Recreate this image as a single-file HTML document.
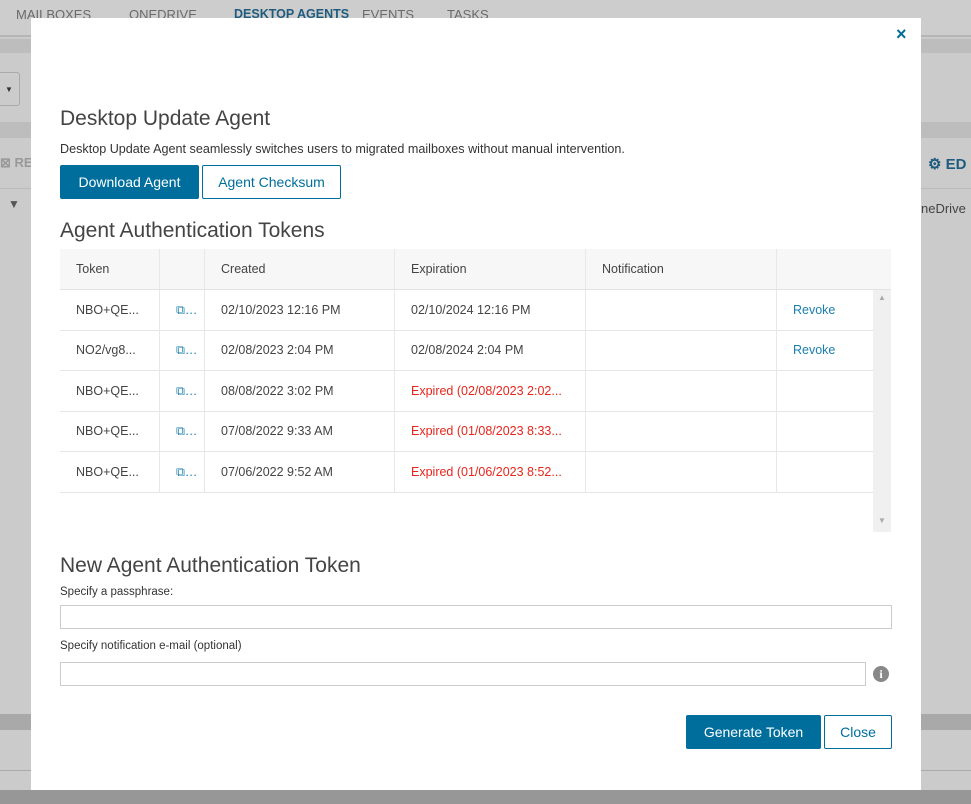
<!DOCTYPE html>
<html><head><meta charset="utf-8"><style>
*{box-sizing:border-box;margin:0;padding:0}
body{width:971px;height:804px;overflow:hidden;background:#cbcbcb;font-family:"Liberation Sans",sans-serif;position:relative;color:#333}
.abs{position:absolute}
.nav{left:0;top:0;width:971px;height:37px;background:#cdcdcd;border-bottom:2px solid #b5b5b5}
.nav span{position:absolute;top:7px;font-size:13px;color:#6a6a6a}
.band{left:0;width:971px;background:#bdbdbd}
.modal{left:31px;top:18px;width:890px;height:772px;background:#fff}
h2{font-weight:normal;font-size:21px;color:#444;position:absolute}
.btn{position:absolute;height:34px;font-size:14px;display:flex;align-items:center;justify-content:center;border-radius:2px}
.pri{background:#006e9c;color:#fff}
.sec{border:1px solid #006e9c;color:#006e9c;background:#fff}
.tbl{left:29px;top:231px;width:831px}
.row{position:absolute;left:0;width:813px;height:41px;border-bottom:1px solid #e6e6e6;font-size:12.5px;color:#444}
.row div{position:absolute;top:0;height:40px;line-height:40px;border-right:1px solid #e8e8e8;padding-left:16px;white-space:nowrap;overflow:hidden}
.red{color:#e8251b}
.lnk{color:#1a7fae}
input{position:absolute;height:24px;border:1px solid #ccc;background:#fff}
.lbl{position:absolute;font-size:11.5px;color:#333}
</style></head><body>
<div class="abs nav"><span style="left:16px">MAILBOXES</span><span style="left:129px">ONEDRIVE</span><span style="left:234px;color:#1e5b7e;font-weight:bold;font-size:12.5px">DESKTOP AGENTS</span><span style="left:362px">EVENTS</span><span style="left:447px">TASKS</span></div>
<div class="abs band" style="top:39px;height:14px"></div>
<div class="abs" style="left:-4px;top:72px;width:24px;height:34px;border:1px solid #aaa;border-radius:3px;font-size:8px;padding:12px 0 0 8px">▼</div>
<div class="abs band" style="top:122px;height:16px"></div>
<div class="abs" style="left:0;top:155px;font-size:13px;color:#999;font-weight:bold">⊠ RE</div>
<div class="abs" style="left:0;top:188px;width:31px;height:14px;border-top:1px solid #bbb"></div>
<div class="abs" style="left:8px;top:197px;font-size:12px;color:#555">▼</div>
<div class="abs" style="left:928px;top:155px;font-size:15px;color:#1e5b7e;font-weight:bold">⚙ ED</div>
<div class="abs" style="left:921px;top:201px;font-size:13px;color:#444">neDrive</div>
<div class="abs" style="left:921px;top:188px;width:50px;border-top:1px solid #bbb"></div>
<div class="abs band" style="top:714px;height:16px;background:#a9a9a9"></div>
<div class="abs" style="left:0;top:770px;width:971px;border-top:1px solid #aaa"></div>
<div class="abs band" style="top:790px;height:14px;background:#979797"></div>

<div class="abs modal">
<div class="abs" style="left:865px;top:6px;font-size:18px;color:#006e9c;font-weight:bold">×</div>
<h2 style="left:29px;top:89px">Desktop Update Agent</h2>
<div class="abs" style="left:29px;top:124px;font-size:12.6px;color:#333">Desktop Update Agent seamlessly switches users to migrated mailboxes without manual intervention.</div>
<div class="btn pri" style="left:29px;top:147px;width:139px">Download Agent</div>
<div class="btn sec" style="left:171px;top:147px;width:139px">Agent Checksum</div>
<h2 style="left:29px;top:201px">Agent Authentication Tokens</h2>
<div class="abs tbl">
<div class="row" style="top:0;width:831px;background:#f7f7f7;border-bottom:1px solid #e3e3e3;height:41px">
<div style="left:0;width:100px">Token</div><div style="left:100px;width:45px"></div><div style="left:145px;width:190px">Created</div><div style="left:335px;width:191px">Expiration</div><div style="left:526px;width:191px">Notification</div></div>
<div class="abs" style="left:813px;top:41px;width:18px;height:242px;background:#f0f0f0;font-size:8px;color:#aaa;text-align:center"><div style="margin-top:3px">▲</div><div style="margin-top:214px">▼</div></div>
<div class="row" style="top:41px"><div style="left:0;width:100px">NBO+QE...</div><div style="left:100px;width:45px;color:#1a7fae">⧉…</div><div style="left:145px;width:190px">02/10/2023 12:16 PM</div><div style="left:335px;width:191px">02/10/2024 12:16 PM</div><div style="left:526px;width:191px"></div><div class="lnk" style="left:717px;border:0">Revoke</div></div>
<div class="row" style="top:81px"><div style="left:0;width:100px">NO2/vg8...</div><div style="left:100px;width:45px;color:#1a7fae">⧉…</div><div style="left:145px;width:190px">02/08/2023 2:04 PM</div><div style="left:335px;width:191px">02/08/2024 2:04 PM</div><div style="left:526px;width:191px"></div><div class="lnk" style="left:717px;border:0">Revoke</div></div>
<div class="row" style="top:122px"><div style="left:0;width:100px">NBO+QE...</div><div style="left:100px;width:45px;color:#1a7fae">⧉…</div><div style="left:145px;width:190px">08/08/2022 3:02 PM</div><div class="red" style="left:335px;width:191px">Expired (02/08/2023 2:02...</div><div style="left:526px;width:191px"></div></div>
<div class="row" style="top:162px"><div style="left:0;width:100px">NBO+QE...</div><div style="left:100px;width:45px;color:#1a7fae">⧉…</div><div style="left:145px;width:190px">07/08/2022 9:33 AM</div><div class="red" style="left:335px;width:191px">Expired (01/08/2023 8:33...</div><div style="left:526px;width:191px"></div></div>
<div class="row" style="top:203px"><div style="left:0;width:100px">NBO+QE...</div><div style="left:100px;width:45px;color:#1a7fae">⧉…</div><div style="left:145px;width:190px">07/06/2022 9:52 AM</div><div class="red" style="left:335px;width:191px">Expired (01/06/2023 8:52...</div><div style="left:526px;width:191px"></div></div>
</div>
<h2 style="left:29px;top:536px">New Agent Authentication Token</h2>
<div class="lbl" style="left:29px;top:568px">Specify a passphrase:</div>
<input style="left:29px;top:587px;width:832px">
<div class="lbl" style="left:29px;top:622px">Specify notification e-mail (optional)</div>
<input style="left:29px;top:644px;width:806px">
<div class="abs" style="left:842px;top:648px;width:16px;height:16px;border-radius:50%;background:#888;color:#fff;font-size:12px;font-weight:bold;text-align:center;line-height:16px;font-family:'Liberation Serif',serif">i</div>
<div class="btn pri" style="left:655px;top:697px;width:135px">Generate Token</div>
<div class="btn sec" style="left:793px;top:697px;width:68px">Close</div>
</div>
</body></html>
